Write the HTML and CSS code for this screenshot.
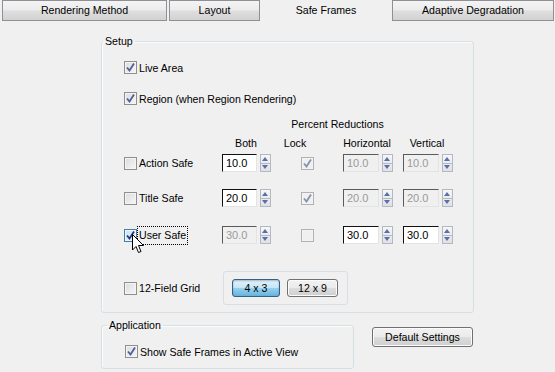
FILE: index.html
```html
<!DOCTYPE html>
<html>
<head>
    <title>Safe Frames</title>
    <link rel="stylesheet" href="styles.css">
</head>
<body>
    <div class="tabs">
        <div class="tab tab-render">Rendering Method</div>
        <div class="tab tab-layout">Layout</div>
        <div class="tab tab-active">Safe Frames</div>
        <div class="tab tab-adaptive">Adaptive Degradation</div>
    </div>

    <div class="panel">
        <fieldset class="group setup">
            <legend>Setup</legend>
            <div class="group-body setup-body">
                <label class="check row-live"><span class="box on"><svg viewBox="0 0 11 11"><path d="M2 5.5 L4.5 8.5 L9 1.5"/></svg></span>Live Area</label>
                <label class="check row-region"><span class="box on"><svg viewBox="0 0 11 11"><path d="M2 5.5 L4.5 8.5 L9 1.5"/></svg></span>Region (when Region Rendering)</label>

                <div class="cols row-percent">
                    <span class="percent">Percent Reductions</span>
                </div>
                <div class="cols row-heads">
                    <span></span>
                    <span class="head">Both</span>
                    <span class="head">Lock</span>
                    <span class="head">Horizontal</span>
                    <span class="head">Vertical</span>
                </div>

                <!-- Action Safe -->
                <div class="cols row-frame row-action">
                    <label class="check"><span class="box"></span>Action Safe</label>
                    <div class="spin"><span class="field">10.0</span><span class="arrows"></span></div>
                    <div class="lock"><span class="box dim on"><svg viewBox="0 0 11 11"><path d="M2 5.5 L4.5 8.5 L9 1.5"/></svg></span></div>
                    <div class="spin"><span class="field off">10.0</span><span class="arrows"></span></div>
                    <div class="spin"><span class="field off">10.0</span><span class="arrows"></span></div>
                </div>

                <!-- Title Safe -->
                <div class="cols row-frame row-title">
                    <label class="check"><span class="box"></span>Title Safe</label>
                    <div class="spin"><span class="field">20.0</span><span class="arrows"></span></div>
                    <div class="lock"><span class="box dim on"><svg viewBox="0 0 11 11"><path d="M2 5.5 L4.5 8.5 L9 1.5"/></svg></span></div>
                    <div class="spin"><span class="field off">20.0</span><span class="arrows"></span></div>
                    <div class="spin"><span class="field off">20.0</span><span class="arrows"></span></div>
                </div>

                <!-- User Safe -->
                <div class="cols row-frame row-user">
                    <label class="check user-check"><span class="box hot on"><svg viewBox="0 0 11 11"><path d="M2 5.5 L4.5 8.5 L9 1.5"/></svg></span><span class="focus">User Safe</span>
                        <svg class="cursor" width="13" height="20" viewBox="0 0 13 20"><path d="M0.5 0.5 L0.5 16 L4 12.5 L6.5 18.5 L9 17.5 L6.5 11.5 L11.5 11.5 Z"/></svg>
                    </label>
                    <div class="spin"><span class="field off">30.0</span><span class="arrows"></span></div>
                    <div class="lock"><span class="box dim"></span></div>
                    <div class="spin"><span class="field">30.0</span><span class="arrows"></span></div>
                    <div class="spin"><span class="field">30.0</span><span class="arrows"></span></div>
                </div>

                <div class="grid-row">
                    <label class="check grid-label"><span class="box"></span>12-Field Grid</label>
                    <div class="grid-box">
                        <button class="btn btn-on">4 x 3</button>
                        <button class="btn btn-wide">12 x 9</button>
                    </div>
                </div>
            </div>
        </fieldset>

        <div class="bottom">
            <fieldset class="group application">
                <legend>Application</legend>
                <div class="group-body app-body">
                    <label class="check"><span class="box on"><svg viewBox="0 0 11 11"><path d="M2 5.5 L4.5 8.5 L9 1.5"/></svg></span>Show Safe Frames in Active View</label>
                </div>
            </fieldset>
            <button class="btn btn-default">Default Settings</button>
        </div>
    </div>
</body>
</html>
```

FILE: styles.css
```css
body {
    margin: 0;
    background-color: #f0f0f0;
    font-family: "Liberation Sans", Arial, sans-serif;
    font-size: 10.6px;
    color: #000;
}
/* Tab strip */
.tabs {
    display: flex;
    height: 21px;
    padding-left: 2px;
}
.tab {
    box-sizing: border-box;
    height: 21px;
    line-height: 19px;
    text-align: center;
    border: 1px solid #8e9096;
    background: linear-gradient(#f4f4f4, #ececec 45%, #dedede 55%, #d2d2d2);
}
.tab-render { width: 165px; }
.tab-layout { width: 91px; margin-left: 2px; }
.tab-active {
    width: 132px;
    border-color: transparent;
    background: none;
    line-height: 19px;
}
.tab-adaptive { width: 162px; }

.panel {
    padding: 14px 0 0 101px;
}
/* Group boxes */
.group {
    margin: 0;
    padding: 0;
    min-width: 0;
    box-sizing: border-box;
    border: 1px solid #d5dfe5;
    border-radius: 3px;
    box-shadow: inset 1px 1px 0 #fafcfd;
}
.group legend {
    padding: 0 2px;
    line-height: 13px;
}
.setup { width: 373px; }
.setup legend { margin-left: 1px; }
.setup-body {
    padding: 13px 0 7px 22px;
}
.application { width: 253px; }
.application legend { margin-left: 5px; }
.app-body {
    padding: 13px 0 10px 23px;
}
/* Checkboxes */
.check {
    display: flex;
    align-items: center;
    height: 13px;
    position: relative;
}
.box {
    box-sizing: border-box;
    width: 13px;
    height: 13px;
    margin-right: 2px;
    border: 1px solid #8f8f8f;
    background: linear-gradient(135deg, #dcdcdc, #f6f6f6);
    box-shadow: inset 0 0 0 1px #f4f4f4;
    flex: none;
    display: flex;
    align-items: center;
    justify-content: center;
}
.box svg {
    width: 11px;
    height: 11px;
    display: none;
}
.box.on svg { display: block; }
.box path {
    fill: none;
    stroke: #4c5f98;
    stroke-width: 1.8;
}
.box.dim {
    border-color: #b1b1b1;
    background: #f0f0f0;
    box-shadow: inset 0 0 0 1px #f4f4f4;
    margin-right: 0;
}
.box.dim path { stroke: #8690b0; }
.box.hot {
    border-color: #3c7fb1;
    background: linear-gradient(135deg, #c8e0f5, #f0f7fc);
}
.box.hot path { stroke: #1c3777; }

.row-region { margin-top: 18px; }

/* Percent reductions table */
.cols {
    display: grid;
    grid-template-columns: 98px 49px 72px 60px 50px;
    align-items: center;
}
.row-percent {
    margin-top: 12px;
    line-height: 14px;
}
.percent {
    grid-column: 2 / 6;
    text-align: center;
}
.row-heads {
    margin-top: 5px;
    line-height: 14px;
}
.head {
    text-align: center;
    width: 48px;
}
.row-frame { height: 18px; }
.row-action { margin-top: 4px; }
.row-title { margin-top: 17px; }
.row-user { margin-top: 19px; }
.lock {
    display: flex;
    justify-content: center;
}
.spin {
    display: flex;
    gap: 3px;
    height: 18px;
}
.field {
    box-sizing: border-box;
    width: 36px;
    height: 18px;
    padding-left: 3px;
    line-height: 16px;
    font-size: 11px;
    background: #fff;
    border-top: 1px solid #111;
    border-left: 1px solid #111;
    border-right: 1px solid #e3e3e3;
    border-bottom: 1px solid #e3e3e3;
}
.field.off {
    background: #f0f0f0;
    color: #9a9a9a;
    border-top-color: #5a5a5a;
    border-left-color: #5a5a5a;
}
/* Spinner arrows */
.arrows {
    box-sizing: border-box;
    width: 11px;
    height: 18px;
    border: 1px solid #b3b8c2;
    background:
        linear-gradient(#b3b8c2, #b3b8c2) 0 8px / 100% 1px no-repeat,
        linear-gradient(#f6f6f6, #dfe1e5);
    position: relative;
}
.arrows::before,
.arrows::after {
    content: "";
    position: absolute;
    left: 1px;
    border-left: 3.5px solid transparent;
    border-right: 3.5px solid transparent;
}
.arrows::before {
    top: 2px;
    border-bottom: 4px solid #5a6ea8;
}
.arrows::after {
    bottom: 2px;
    border-top: 4px solid #5a6ea8;
}
/* Focus rect and mouse pointer on User Safe */
.focus {
    outline: 1px dotted #000;
    outline-offset: 0;
    line-height: 17px;
    margin-left: -1px;
    padding: 0 1px;
}
.cursor {
    position: absolute;
    left: 8px;
    top: 5px;
}
.cursor path {
    fill: #fff;
    stroke: #000;
    stroke-width: 1;
}

/* 12-field grid */
.grid-row {
    display: flex;
    align-items: center;
    margin-top: 27px;
}
.grid-label { width: 99px; }
.grid-box {
    display: flex;
    gap: 7px;
    padding: 7px 9px 7px 8px;
    border: 1px solid #d5dfe5;
    border-radius: 3px;
}
/* Buttons */
.btn {
    box-sizing: border-box;
    height: 18px;
    width: 48px;
    padding: 0;
    font-family: inherit;
    font-size: 10.6px;
    color: #000;
    border: 1px solid #707070;
    border-radius: 3px;
    background: linear-gradient(#f2f2f2, #ebebeb 50%, #dddddd 50%, #cfcfcf);
    box-shadow: inset 0 0 0 1px #fbfbfb;
}
.btn-wide { width: 51px; }
.btn-on {
    border-color: #2c628b;
    background: linear-gradient(#e5f4fc, #c4e5f6 50%, #98d1ef 50%, #68b3db);
    box-shadow: inset 0 1px 2px rgba(0, 0, 0, 0.25);
}
.bottom {
    display: flex;
    align-items: flex-start;
    margin-top: 6px;
}
.btn-default {
    width: 101px;
    height: 20px;
    margin: 8px 0 0 18px;
}
```
